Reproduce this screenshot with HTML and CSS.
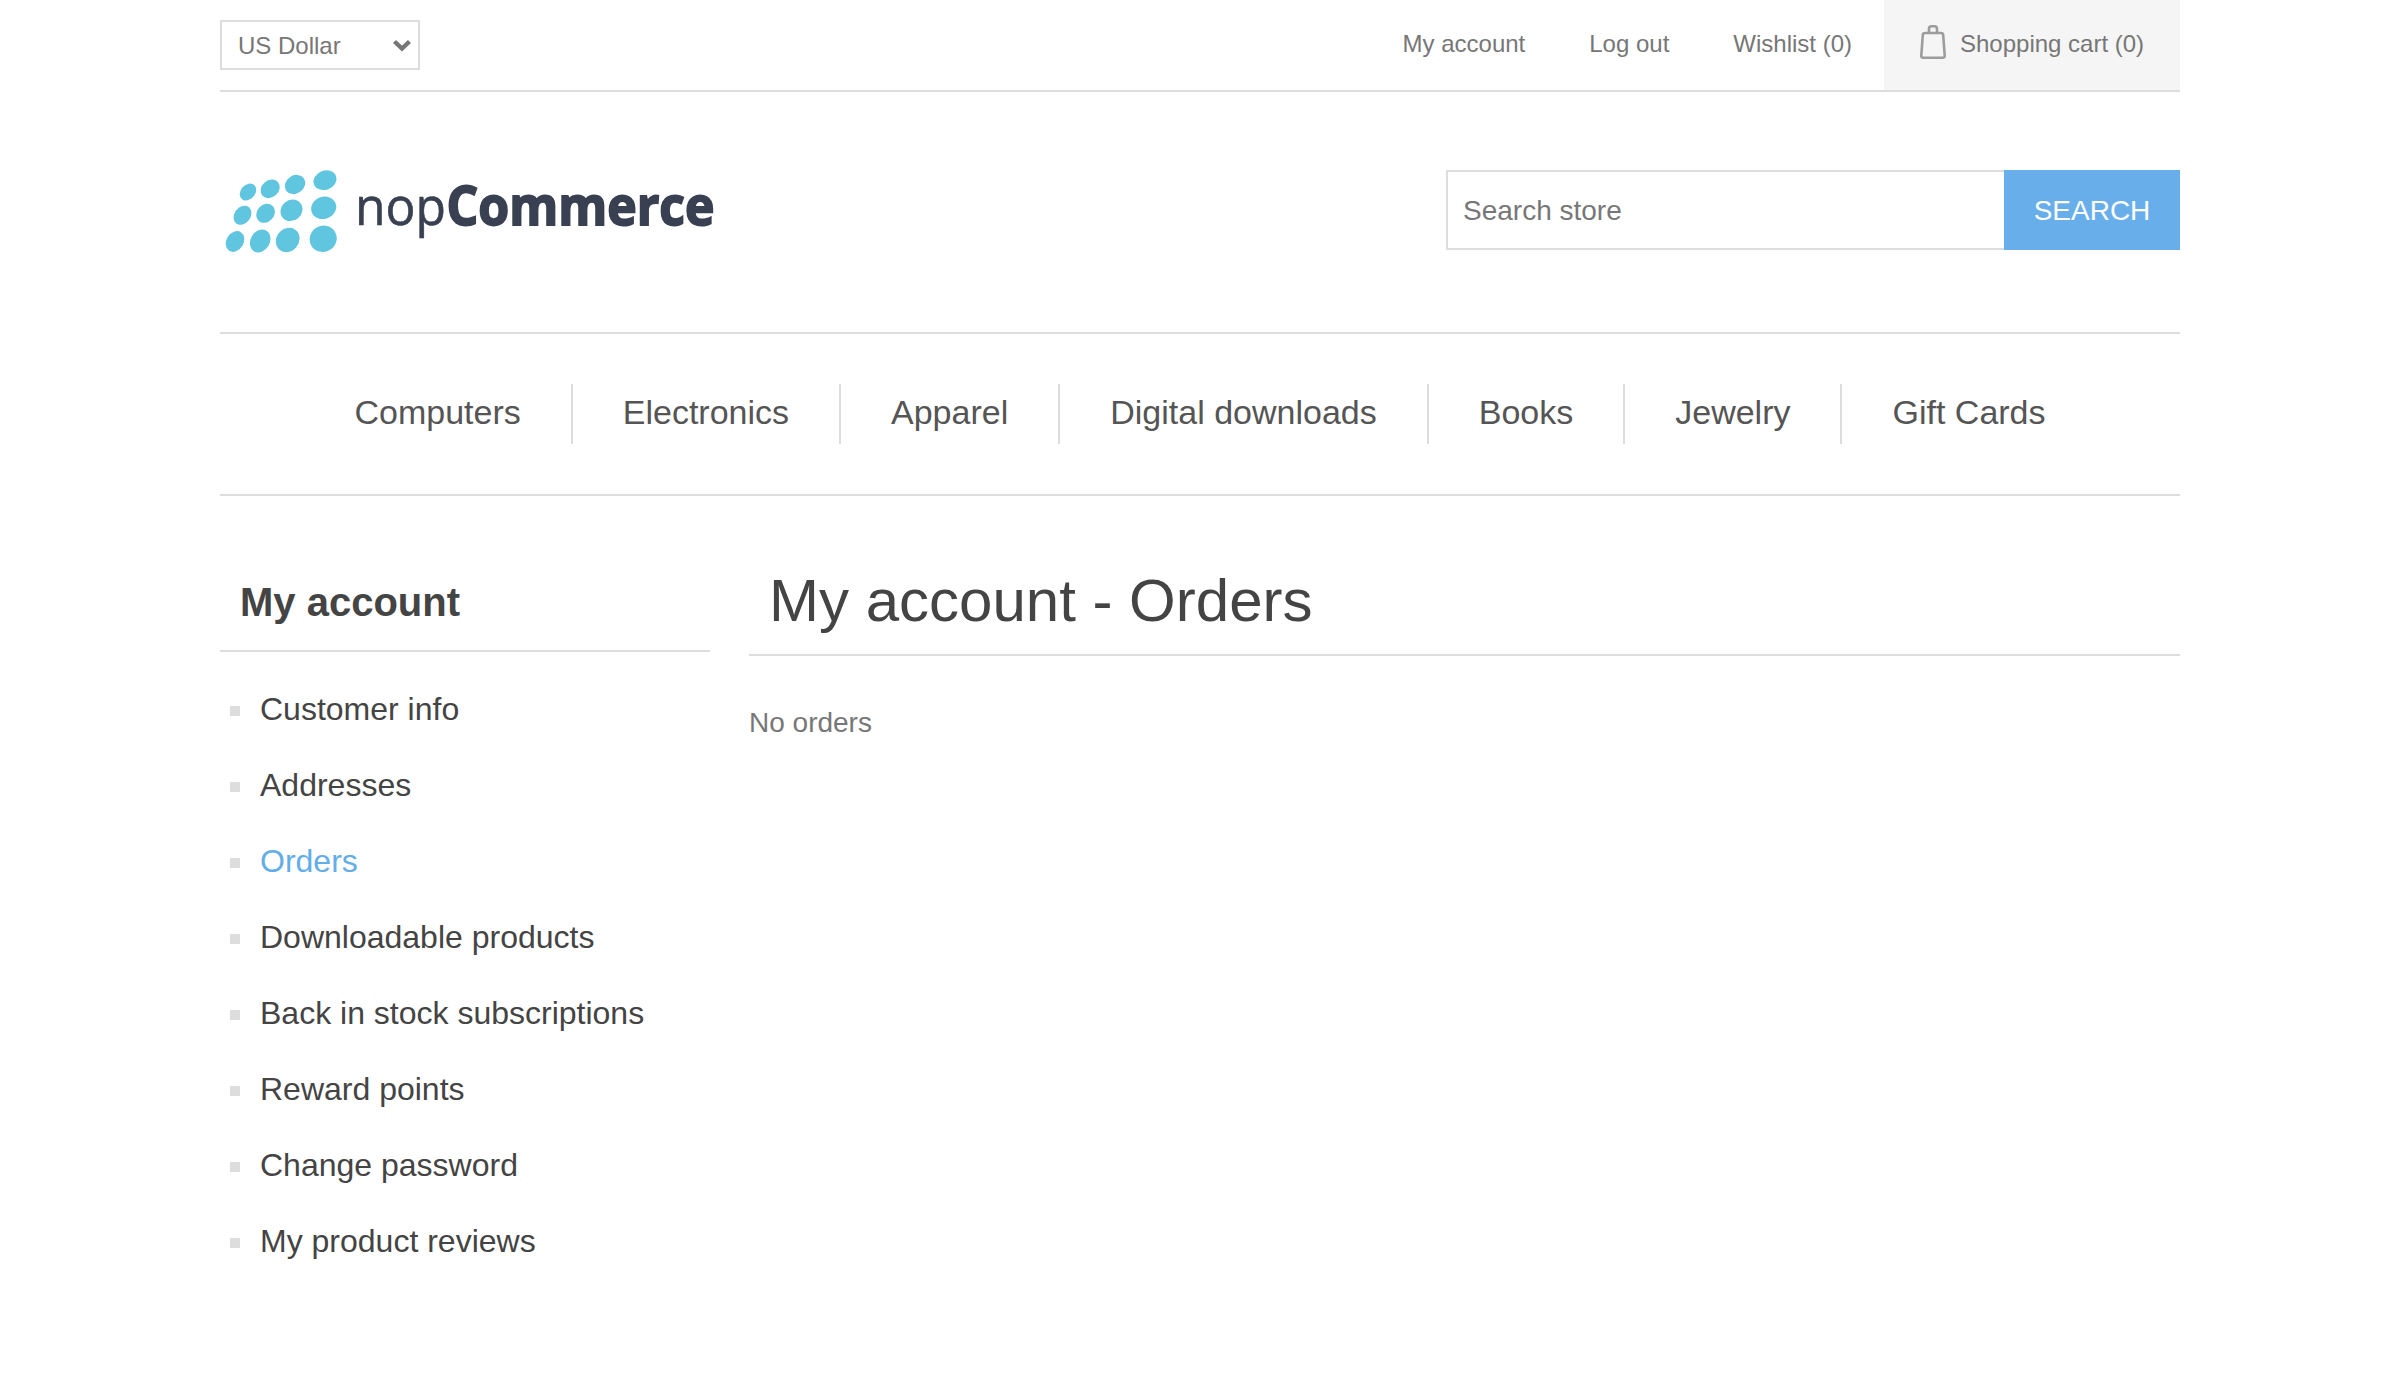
FILE: index.html
```html
<!DOCTYPE html>
<html lang="en">
<head>
<meta charset="utf-8">
<title>My account - Orders</title>
<link rel="stylesheet" href="styles.css">
</head>
<body>
<div class="page">
  <header>
    <div class="topbar">
      <button class="currency" type="button">US Dollar
        <svg class="chevron" width="20" height="14" viewBox="0 0 20 14"><path d="M2.500 2.500 10 9.500l7.500-7" fill="none" stroke="#777" stroke-width="4.400"/></svg>
      </button>
      <nav class="links">
        <a href="#">My account</a>
        <a href="#">Log out</a>
        <a href="#">Wishlist (0)</a>
        <a class="cart" href="#">
          <svg width="26" height="36" viewBox="0 0 26 36" fill="none" stroke="#9c9c9c" stroke-width="2.600"><path d="M9 9V5Q9 2.300 11.500 2.300h3Q17 2.300 17 5V9"/><path d="M5 9h16q2 0 2.200 2L24.700 31.500q.2 2.200-2 2.200H3.300q-2.200 0-2-2.200L2.800 11Q3 9 5 9z"/></svg>
          <span>Shopping cart (0)</span>
        </a>
      </nav>
    </div>
    <div class="brand">
      <svg class="logo" width="500" height="100" viewBox="0 0 500 100" role="img" aria-label="nopCommerce">
        <g fill="#60c5de">
          <ellipse cx="28" cy="30" rx="9.300" ry="7.200" transform="rotate(-48 28 30)"/>
          <ellipse cx="50.200" cy="26.800" rx="10.300" ry="8.500" transform="rotate(-42 50.200 26.800)"/>
          <ellipse cx="75" cy="22.500" rx="10.800" ry="9" transform="rotate(-35 75 22.500)"/>
          <ellipse cx="105" cy="18.200" rx="11.800" ry="9.500" transform="rotate(-20 105 18.200)"/>
          <ellipse cx="22.500" cy="53.300" rx="10.300" ry="8" transform="rotate(-52 22.500 53.300)"/>
          <ellipse cx="45.600" cy="51.300" rx="10.300" ry="8.500" transform="rotate(-48 45.600 51.300)"/>
          <ellipse cx="71.500" cy="48.300" rx="11.500" ry="10.300" transform="rotate(-40 71.500 48.300)"/>
          <ellipse cx="103.700" cy="45.800" rx="12.700" ry="11" transform="rotate(-20 103.700 45.800)"/>
          <ellipse cx="15" cy="79.500" rx="11" ry="8.600" transform="rotate(-58 15 79.500)"/>
          <ellipse cx="40.200" cy="79" rx="12" ry="9.600" transform="rotate(-60 40.200 79)"/>
          <ellipse cx="67.700" cy="78" rx="12.800" ry="11.200" transform="rotate(-50 67.700 78)"/>
          <ellipse cx="103.200" cy="76.800" rx="13.700" ry="13" transform="rotate(-30 103.200 76.800)"/>
        </g>
        <g class="wordmark">
          <text x="135" y="62.500" textLength="91" lengthAdjust="spacingAndGlyphs">nop</text>
          <text class="strong" x="226.500" y="62.500" textLength="268" lengthAdjust="spacingAndGlyphs">Commerce</text>
        </g>
      </svg>
      <form class="search">
        <input type="text" placeholder="Search store" aria-label="Search store">
        <button type="button">SEARCH</button>
      </form>
    </div>
  </header>
  <nav class="menu">
    <a href="#">Computers</a>
    <a href="#">Electronics</a>
    <a href="#">Apparel</a>
    <a href="#">Digital downloads</a>
    <a href="#">Books</a>
    <a href="#">Jewelry</a>
    <a href="#">Gift Cards</a>
  </nav>
  <div class="columns">
    <aside>
      <h2>My account</h2>
      <ul>
        <li><a href="#">Customer info</a></li>
        <li><a href="#">Addresses</a></li>
        <li><a class="active" href="#">Orders</a></li>
        <li><a href="#">Downloadable products</a></li>
        <li><a href="#">Back in stock subscriptions</a></li>
        <li><a href="#">Reward points</a></li>
        <li><a href="#">Change password</a></li>
        <li><a href="#">My product reviews</a></li>
      </ul>
    </aside>
    <main>
      <h1>My account - Orders</h1>
      <p>No orders</p>
    </main>
  </div>
</div>
</body>
</html>
```
FILE: styles.css
```css
* { box-sizing: border-box; margin: 0; padding: 0; }
body {
  background: #fff;
  color: #777;
  font-family: "Liberation Sans", Arial, sans-serif;
  font-size: 28px;
}
a { color: inherit; text-decoration: none; }
button, input { font: inherit; color: inherit; border-radius: 0; }
.page { width: 1960px; margin: 0 auto; }

.topbar {
  display: flex;
  justify-content: space-between;
  height: 92px;
  border-bottom: 2px solid #ddd;
  font-size: 24px;
}
.currency {
  display: flex;
  align-items: center;
  justify-content: space-between;
  width: 200px;
  height: 50px;
  margin-top: 20px;
  padding: 1px 6px 0 16px;
  border: 2px solid #ddd;
  background: #fff;
}
.links { display: flex; gap: 64px; line-height: 88px; }
.links .cart {
  display: flex;
  gap: 14px;
  width: 296px;
  margin-left: -32px;
  padding-left: 36px;
  background: #f5f5f5;
}
.cart svg { margin-top: 24px; }

.brand {
  display: flex;
  justify-content: space-between;
  height: 242px;
  padding-top: 70px;
  border-bottom: 2px solid #ddd;
}
.logo { overflow: visible; }
.wordmark {
  fill: #394052;
  font: 400 53px "Open Sans", "Noto Sans", sans-serif;
  stroke: #394052;
  stroke-width: 0.6;
}
.wordmark .strong { font-weight: 700; stroke-width: 1.8; }
.search { display: flex; width: 734px; height: 80px; margin-top: 8px; }
.search input {
  flex: 1;
  min-width: 0;
  padding: 1px 15px 0;
  border: 2px solid #ddd;
  border-right: 0;
  outline: 0;
}
.search input::placeholder { color: #777; opacity: 1; }
.search button {
  width: 176px;
  padding-top: 1px;
  border: 0;
  background: #68aeeb;
  color: #fff;
}

.menu {
  display: flex;
  justify-content: center;
  padding: 50px 0;
  height: 162px;
  border-bottom: 2px solid #ddd;
  color: #555;
  font-size: 34px;
  line-height: 56px;
}
.menu a { height: 60px; padding: 0 50px; }
.menu a + a { border-left: 2px solid #ddd; }

.columns { display: flex; gap: 39px; color: #444; }
aside { width: 490px; }
h2 {
  height: 156px;
  padding: 83px 20px 0;
  border-bottom: 2px solid #ddd;
  font-size: 40px;
  line-height: 46px;
}
ul { list-style: none; padding: 20px 10px; font-size: 32px; }
li { display: flex; align-items: center; gap: 20px; height: 76px; }
li::before { content: ""; width: 10px; height: 10px; margin-top: 2px; background: #ddd; }
li a { padding-bottom: 2px; }
.active { color: #62adea; }
main { flex: 1; }
h1 {
  height: 160px;
  padding: 71px 20px 0;
  border-bottom: 2px solid #ddd;
  font-size: 60px;
  font-weight: 400;
  line-height: 68px;
}
main p { padding-top: 51px; line-height: 32px; color: #777; }
```
